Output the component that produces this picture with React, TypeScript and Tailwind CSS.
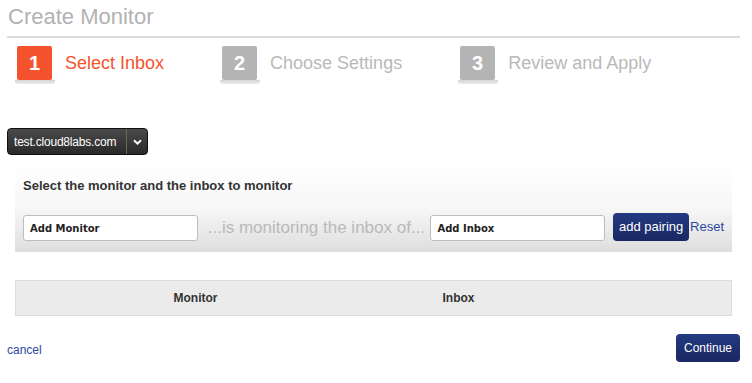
import React from "react";

const steps = [
  { n: "1", label: "Select Inbox", active: true },
  { n: "2", label: "Choose Settings", active: false },
  { n: "3", label: "Review and Apply", active: false },
];

export default function App() {
  return (
    <div
      className="w-[752px] h-[383px] bg-white overflow-hidden"
      style={{ fontFamily: '"Liberation Sans", Arial, sans-serif' }}
    >
      {/* HEADER */}
      <div className="pl-[8px] pt-[3px] h-[36px] text-[22px] leading-[28px] text-[#b2b2b2]">
        Create Monitor
      </div>
      <div className="ml-[7px] w-[733px] h-[2px] bg-[#dcdcdc]" />

      {/* STEPS */}
      <div className="flex items-start gap-[58px] pl-[17px] pt-[8px]">
        {steps.map((s) => (
          <div key={s.n} className="flex items-start gap-[13px]">
            <div className="w-[35px] flex flex-col items-center">
              <div
                className={`w-[35px] h-[34px] rounded-[2px] flex items-center justify-center text-white text-[20px] font-bold ${
                  s.active ? "bg-[#f4532d]" : "bg-[#b4b4b4]"
                }`}
              >
                {s.n}
              </div>
              <div className="w-[40px] shrink-0 h-[4px] rounded-b-[3px] bg-gradient-to-b from-[#d4d4d4] to-[#ececec]" />
            </div>
            <div
              className={`text-[18px] leading-[34px] ${
                s.active ? "text-[#f4532d]" : "text-[#b9b9b9]"
              }`}
            >
              {s.label}
            </div>
          </div>
        ))}
      </div>

      {/* DOMAIN DROPDOWN */}
      <div className="pl-[7px] pt-[44px]">
        <div className="w-[141px] h-[27px] flex rounded-[4px] border border-[#111] bg-gradient-to-b from-[#4a4a4a] to-[#2a2a2a] text-white">
          <div className="flex-1 flex items-center pl-[6px] text-[12px] tracking-[-0.2px]">
            test.cloud8labs.com
          </div>
          <div className="w-px bg-[#6b6b50]" />
          <div className="w-[20px] flex items-center justify-center">
            <svg width="9" height="6" viewBox="0 0 9 6">
              <path d="M1 1.2 L4.5 4.6 L8 1.2" stroke="white" strokeWidth="2" fill="none" />
            </svg>
          </div>
        </div>
      </div>

      {/* PAIRING PANEL */}
      <div className="ml-[15px] mt-[8px] w-[717px] h-[89px] bg-gradient-to-b from-white via-[#f7f7f7] to-[#dedede] px-[8px] pt-[15px]">
        <div className="text-[13px] font-bold text-[#333] leading-[16px]">
          Select the monitor and the inbox to monitor
        </div>
        <div className="flex items-center mt-[21px]">
          <div
            className="w-[175px] h-[26px] bg-white border border-[#bdbdbd] rounded-[3px] flex items-center pl-[6px] text-[10px] font-bold text-[#222]"
            style={{ fontFamily: '"DejaVu Sans", Verdana, sans-serif' }}
          >
            Add Monitor
          </div>
          <div className="ml-[10px] w-[223px] text-[17px] text-[#b9b9b9] whitespace-nowrap">
            ...is monitoring the inbox of...
          </div>
          <div
            className="w-[175px] h-[26px] bg-white border border-[#bdbdbd] rounded-[3px] flex items-center pl-[6px] text-[10px] font-bold text-[#222]"
            style={{ fontFamily: '"DejaVu Sans", Verdana, sans-serif' }}
          >
            Add Inbox
          </div>
          <button className="ml-[8px] w-[76px] h-[28px] rounded-[4px] bg-gradient-to-b from-[#243a82] to-[#1a2862] text-white text-[13px] -mt-[3px]">
            add pairing
          </button>
          <a className="ml-[1px] text-[13px] text-[#2b48a3] -mt-[3px]">Reset</a>
        </div>
      </div>

      {/* TABLE HEADER */}
      <div className="ml-[15px] mt-[28px] w-[717px] h-[36px] bg-[#ebebeb] border border-[#dddddd] grid grid-cols-[359px_167px_1fr] items-center text-[12px] font-bold text-[#333]">
        <div className="text-center">Monitor</div>
        <div className="text-center">Inbox</div>
        <div />
      </div>

      {/* FOOTER */}
      <div className="flex items-center justify-between pl-[7px] pr-[12px] mt-[18px]">
        <a className="text-[12px] text-[#2b48a3] mt-[4px]">cancel</a>
        <button className="w-[64px] h-[28px] rounded-[4px] bg-gradient-to-b from-[#243a82] to-[#1a2862] text-white text-[12px]">
          Continue
        </button>
      </div>
    </div>
  );
}
